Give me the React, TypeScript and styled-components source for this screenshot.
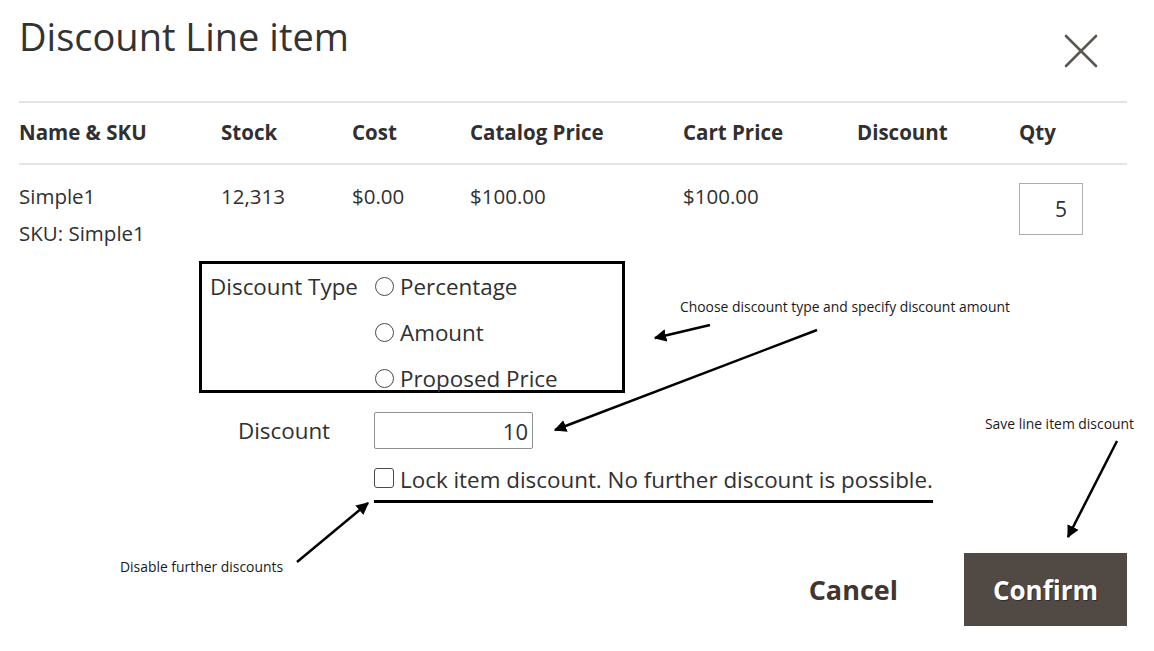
import styled, { createGlobalStyle } from 'styled-components';

const GlobalStyle = createGlobalStyle`
  html, body {
    margin: 0;
    padding: 0;
    background: #ffffff;
  }
  body {
    font-family: 'Open Sans', 'Liberation Sans', sans-serif;
    color: #303030;
  }
`;

const columns = ['Name & SKU', 'Stock', 'Cost', 'Catalog Price', 'Cart Price', 'Discount', 'Qty'];
const discountTypes = ['Percentage', 'Amount', 'Proposed Price'];

export default function App() {
  return (
    <>
      <GlobalStyle />
      <Page>
        <Modal>
          <Header>
            <Title>Discount Line item</Title>
            <CloseButton aria-label="close">
              <svg width="34" height="34" viewBox="0 0 34 34">
                <path d="M2 2 L32 32 M32 2 L2 32" stroke="#5e5751" strokeWidth="2.6" strokeLinecap="round" />
              </svg>
            </CloseButton>
          </Header>

          <TableHead>
            {columns.map((c) => (
              <HeadCell key={c}>{c}</HeadCell>
            ))}
          </TableHead>

          <TableRow>
            <Cell>
              <div>Simple1</div>
              <Sku>SKU: Simple1</Sku>
            </Cell>
            <Cell>12,313</Cell>
            <Cell>$0.00</Cell>
            <Cell>$100.00</Cell>
            <Cell>$100.00</Cell>
            <Cell />
            <Cell>
              <QtyInput defaultValue="5" />
            </Cell>
          </TableRow>

          <Form>
            <TypeBox>
              <FieldLabel>Discount Type</FieldLabel>
              <RadioList>
                {discountTypes.map((t) => (
                  <Option key={t}>
                    <Radio />
                    {t}
                  </Option>
                ))}
              </RadioList>
            </TypeBox>

            <DiscountRow>
              <FieldLabel>Discount</FieldLabel>
              <AmountInput defaultValue="10" />
            </DiscountRow>

            <LockRow>
              <LockLabel>
                <Checkbox />
                Lock item discount. No further discount is possible.
              </LockLabel>
            </LockRow>
          </Form>

          <Actions>
            <CancelButton>Cancel</CancelButton>
            <ConfirmButton>Confirm</ConfirmButton>
          </Actions>
        </Modal>

        <Arrows width="1154" height="651" viewBox="0 0 1154 651">
          <defs>
            <marker id="head" viewBox="0 0 10 10" refX="9" refY="5" markerWidth="5" markerHeight="5" orient="auto">
              <path d="M0 0 L10 5 L0 10 z" fill="#000" />
            </marker>
          </defs>
          <line x1="710" y1="325" x2="655" y2="338" stroke="#000" strokeWidth="2.5" markerEnd="url(#head)" />
          <line x1="817" y1="330" x2="555" y2="430" stroke="#000" strokeWidth="2.5" markerEnd="url(#head)" />
          <line x1="1117" y1="441" x2="1068" y2="537" stroke="#000" strokeWidth="2.5" markerEnd="url(#head)" />
          <line x1="297" y1="562" x2="368" y2="503" stroke="#000" strokeWidth="2.5" markerEnd="url(#head)" />
        </Arrows>
        <Note $x={680} $y={297}>Choose discount type and specify discount amount</Note>
        <Note $x={985} $y={414}>Save line item discount</Note>
        <Note $x={120} $y={557}>Disable further discounts</Note>
      </Page>
    </>
  );
}

const Page = styled.div`
  position: relative;
  width: 1154px;
  height: 651px;
  overflow: hidden;
`;

const Modal = styled.div`
  display: flex;
  flex-direction: column;
  width: 1108px;
  padding-left: 19px;
`;

const Header = styled.div`
  display: flex;
  justify-content: space-between;
  align-items: flex-start;
  height: 103px;
  border-bottom: 2px solid #e4e4e4;
  box-sizing: border-box;
`;

const Title = styled.h1`
  margin: 10px 0 0;
  font-size: 38px;
  font-weight: 400;
  line-height: 52px;
  color: #333333;
`;

const CloseButton = styled.div`
  display: flex;
  margin: 34px 29px 0 0;
`;

const grid = `
  display: grid;
  grid-template-columns: 202px 131px 118px 213px 174px 162px 108px;
`;

const TableHead = styled.div`
  ${grid}
  height: 62px;
  align-items: center;
  border-bottom: 2px solid #e4e4e4;
  box-sizing: border-box;
`;

const HeadCell = styled.div`
  font-size: 20.5px;
  font-weight: 700;
  color: #303030;
  padding-bottom: 2px;
`;

const TableRow = styled.div`
  ${grid}
  padding-top: 13px;
  font-size: 20.5px;
  line-height: 36px;
  color: #303030;
`;

const Cell = styled.div`
  display: flex;
  flex-direction: column;
`;

const Sku = styled.div`
  margin-top: 1px;
`;

const QtyInput = styled.input`
  width: 64px;
  height: 52px;
  margin-top: 5px;
  box-sizing: border-box;
  border: 1px solid #adadad;
  font-family: inherit;
  font-size: 21px;
  color: #303030;
  text-align: right;
  padding: 0 15px;
  outline: none;
`;

const Form = styled.div`
  display: flex;
  flex-direction: column;
  margin: 10px 0 0 180px;
  font-size: 22.4px;
  color: #303030;
`;

const TypeBox = styled.div`
  display: grid;
  grid-template-columns: 164px 1fr;
  width: 426px;
  height: 132px;
  box-sizing: border-box;
  border: 3px solid #000;
  padding: 8px 0 0 0;
`;

const FieldLabel = styled.div`
  text-align: center;
  line-height: 30px;
`;

const RadioList = styled.div`
  display: flex;
  flex-direction: column;
  gap: 16px;
  padding-left: 9px;
`;

const Option = styled.label`
  display: flex;
  align-items: center;
  gap: 6px;
  line-height: 30px;
`;

const Radio = styled.span`
  width: 19px;
  height: 19px;
  border: 1px solid #4a4a4a;
  border-radius: 50%;
  box-sizing: border-box;
  margin-top: -2px;
`;

const DiscountRow = styled.div`
  display: grid;
  grid-template-columns: 170px auto;
  column-gap: 5px;
  justify-content: start;
  align-items: center;
  margin-top: 19px;
`;

const AmountInput = styled.input`
  width: 159px;
  height: 37px;
  box-sizing: border-box;
  border: 1px solid #8f8f8f;
  border-radius: 2px;
  font-family: inherit;
  font-size: 22px;
  color: #303030;
  text-align: right;
  padding: 0 4px;
  outline: none;
`;

const LockRow = styled.div`
  display: flex;
  margin: 16px 0 0 175px;
`;

const LockLabel = styled.label`
  display: flex;
  align-items: center;
  gap: 6px;
  line-height: 30px;
  padding-bottom: 5px;
  border-bottom: 3px solid #000;
`;

const Checkbox = styled.span`
  width: 20px;
  height: 20px;
  border: 1px solid #4a4a4a;
  border-radius: 3px;
  box-sizing: border-box;
  margin-top: -4px;
`;

const Actions = styled.div`
  display: flex;
  justify-content: flex-end;
  align-items: center;
  gap: 66px;
  margin-top: 50px;
`;

const CancelButton = styled.div`
  font-size: 27px;
  font-weight: 700;
  color: #41362f;
`;

const ConfirmButton = styled.div`
  display: flex;
  align-items: center;
  justify-content: center;
  width: 163px;
  height: 73px;
  background: #514943;
  color: #ffffff;
  font-size: 26px;
  font-weight: 700;
  text-shadow: 1px 1px 1px rgba(0, 0, 0, 0.4);
`;

const Arrows = styled.svg`
  position: absolute;
  inset: 0;
  pointer-events: none;
`;

const Note = styled.div<{ $x: number; $y: number }>`
  position: absolute;
  left: ${(p) => p.$x}px;
  top: ${(p) => p.$y}px;
  font-family: 'Open Sans', 'Liberation Sans', sans-serif;
  font-size: 13.9px;
  line-height: 20px;
  color: #1a1a1a;
  white-space: nowrap;
`;
